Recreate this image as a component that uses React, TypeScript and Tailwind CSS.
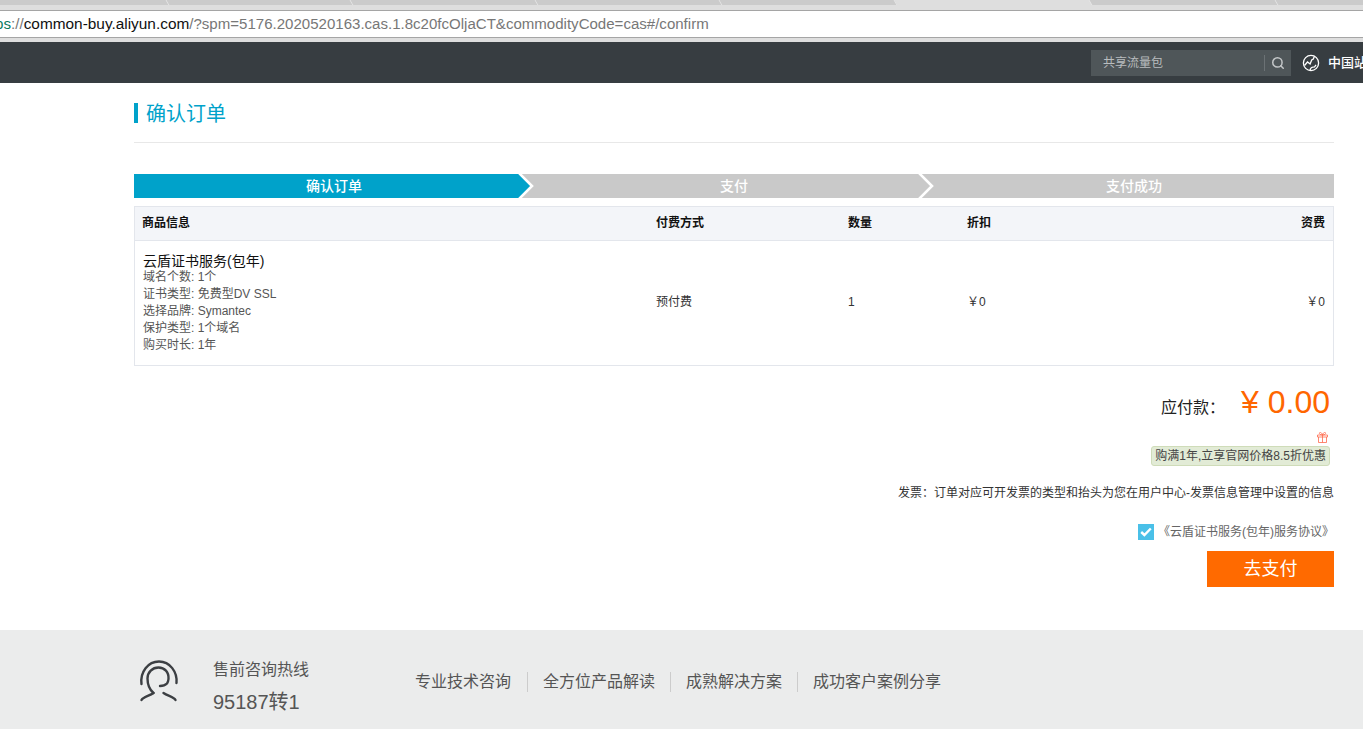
import { Search } from 'lucide-react';

const cjk = 'font-["Liberation_Sans","Noto_Sans_CJK_SC",sans-serif]';

const tabs = [
  { w: 'w-[172px]', active: false },
  { w: 'w-[184px]', active: false },
  { w: 'w-[185px]', active: false },
  { w: 'w-[184px]', active: false },
  { w: 'w-[175px]', active: false },
  { w: 'w-[195px]', active: true },
  { w: 'w-[186px]', active: false },
  { w: 'w-[90px]', active: false },
];

const steps = [
  { label: '确认订单', bg: 'bg-[#00a2ca]', fill: '#00a2ca', arrow: true },
  { label: '支付', bg: 'bg-[#c9c9c9]', fill: '#c9c9c9', arrow: true },
  { label: '支付成功', bg: 'bg-[#c9c9c9]', fill: '#c9c9c9', arrow: false },
];

const details = ['域名个数: 1个', '证书类型: 免费型DV SSL', '选择品牌: Symantec', '保护类型: 1个域名', '购买时长: 1年'];

const links = ['专业技术咨询', '全方位产品解读', '成熟解决方案', '成功客户案例分享'];

function BrowserBar() {
  return (
    <div className="shrink-0">
      <div className="h-[10px] overflow-hidden bg-[#dedede]">
        <div className="flex h-[5px] -ml-[4px] skew-x-[30deg]">
          {tabs.map((t, i) => (
            <div key={i} className={`${t.w} shrink-0 border-r border-[#e6e6e6] ${t.active ? 'bg-[#dedede]' : 'bg-[#cbcbcb]'}`} />
          ))}
        </div>
      </div>
      <div className="h-[28px] border-y border-[#a5a5a5] bg-white overflow-hidden whitespace-nowrap text-[15.15px] leading-[26px] font-['Liberation_Sans',sans-serif]">
        <span className="-ml-[5px] inline-block text-[#0b7a5c]">ps</span>
        <span className="text-[#777]">://</span>
        <span className="text-[15.4px] text-[#111]">common-buy.aliyun.com</span>
        <span className="text-[15.06px] text-[#777]">/?spm=5176.2020520163.cas.1.8c20fcOljaCT&amp;commodityCode=cas#/confirm</span>
      </div>
      <div className="h-[4px] bg-[#dedede]" />
    </div>
  );
}

function TopBar() {
  return (
    <div className="h-[41px] shrink-0 bg-[#373d41] flex items-center justify-end overflow-hidden">
      <div className="w-[200px] h-[26px] bg-[#4f5659] flex items-center shrink-0">
        <span className="flex-1 pl-3 text-xs text-[#b9bdbf]">共享流量包</span>
        <span className="w-[27px] h-4 border-l border-[#6c7275] flex items-center justify-center">
          <Search size={14} strokeWidth={2.6} className="text-[#c3c6c8]" />
        </span>
      </div>
      <svg width="18" height="18" viewBox="0 0 18 18" fill="none" stroke="#fff" strokeWidth="1.3" className="ml-[11px] shrink-0">
        <circle cx="9" cy="9" r="7.6" />
        <path d="M2.5 11.5l3-3.5 2.6 2 1.6-4 1.6-1 1-2.5M8 16.4c.4-2 1.4-3 2.6-3.2l2-.4 1.4-2" />
      </svg>
      <span className="ml-2 w-[35px] shrink-0 whitespace-nowrap overflow-hidden text-[13px] font-medium text-white">中国站</span>
    </div>
  );
}

function Steps() {
  return (
    <div className="flex mt-[31px] h-6 text-sm font-medium text-white">
      {steps.map((s) => (
        <div key={s.label} className={`relative flex-1 flex items-center justify-center pb-px ${s.bg}`}>
          {s.label}
          {s.arrow && (
            <svg width="16" height="24" viewBox="0 0 16 24" className="absolute right-0 top-0">
              <rect width="16" height="24" fill="#c9c9c9" />
              <path d="M0 0h1l12 12L1 24H0z" fill={s.fill} />
              <path d="M1 -1l13 13L1 25" fill="none" stroke="#fff" strokeWidth="2.6" />
            </svg>
          )}
        </div>
      ))}
    </div>
  );
}

function OrderTable() {
  return (
    <div className="mt-2 border border-[#e3e6ec] text-xs">
      <div className="grid grid-cols-[513px_192px_119px_1fr_100px] h-[34px] items-center pb-px bg-[#f3f5f9] border-b border-[#e3e6ec] font-bold text-[#111]">
        <div className="pl-[7px]">商品信息</div>
        <div className="px-2">付费方式</div>
        <div className="px-2">数量</div>
        <div className="px-2">折扣</div>
        <div className="px-2 text-right">资费</div>
      </div>
      <div className="grid grid-cols-[513px_192px_119px_1fr_100px] h-[124px] items-center text-[#333]">
        <div className="px-2 self-start pt-3">
          <div className="text-sm leading-[17px] text-[#111]">云盾证书服务(包年)</div>
          <div className="-mt-px leading-[17px] text-[#555]">
            {details.map((d) => (
              <div key={d}>{d}</div>
            ))}
          </div>
        </div>
        <div className="px-2 -mt-[2px]">预付费</div>
        <div className="px-2 -mt-[2px]">1</div>
        <div className="px-2 -mt-[2px]">￥0</div>
        <div className="px-2 -mt-[2px] text-right">￥0</div>
      </div>
    </div>
  );
}

function Summary() {
  return (
    <div className="flex flex-col items-end">
      <div className="flex items-center mt-[14px] mr-1 h-[44px]">
        <span className="text-base text-[#222] mt-[11px]">应付款：</span>
        <span className="ml-[16px] text-[32px] text-[#ff6600]">¥ 0.00</span>
      </div>
      <svg width="11" height="11" viewBox="0 0 11 11" fill="none" stroke="#ff6a4d" strokeWidth="0.8" className="mr-1.5 mt-[8px]">
        <path d="M.5 3h10v2H.5zM1.5 5v5.5h8V5M5.5 3v7.5M5.5 3C3.5 3 2 2 2.5.8S5 .8 5.5 3zM5.5 3c2 0 3.5-1 3-2.2S6 .8 5.5 3z" />
      </svg>
      <div className="mr-1 mt-[3px] h-5 px-[3px] flex items-center bg-[#e2ebd6] border border-[#cfdcb9] rounded-[3px] text-[#444] text-xs whitespace-nowrap">
        购满1年,立享官网价格8.5折优惠
      </div>
      <div className="mt-[18px] text-xs leading-[18px] text-[#333]">
        发票：订单对应可开发票的类型和抬头为您在用户中心-发票信息管理中设置的信息
      </div>
      <div className="flex items-center mt-[22px]">
        <span className="w-4 h-4 mr-1 bg-[#4ac0e8] flex items-center justify-center">
          <svg width="12" height="10" viewBox="0 0 12 10" fill="none" stroke="#fff" strokeWidth="2.4">
            <path d="M1.2 5l3.2 3L10.8 1.5" />
          </svg>
        </span>
        <span className="text-xs leading-4 text-[#666]">《云盾证书服务(包年)服务协议》</span>
      </div>
      <button className="mt-[11px] w-[127px] h-9 bg-[#ff6a00] text-white text-lg">去支付</button>
    </div>
  );
}

function Footer() {
  return (
    <div className="h-[99px] shrink-0 bg-[#ebecec] text-[#555]">
      <div className="w-[1200px] ml-[134px] h-full flex items-start">
        <svg width="40" height="42" viewBox="0 0 40 42" fill="none" stroke="#3c3f43" strokeWidth="2.4" strokeLinecap="round" className="ml-[5px] mt-[30px] shrink-0">
          <path d="M2.5 24C1 12 9 1.5 20 1.5S38.5 12 37.5 23" />
          <path d="M14.5 33C11 30 8.5 25 8.5 18.5 8.5 12 13.5 7.5 19.5 7.5S30 12 29.5 19c-.2 2-.8 3.5-1.5 4.5-2 2-5 2.5-7 2.5" />
          <path d="M2.5 40C4 37 10 36 14.5 33M24.5 33C29 36 35 37 36.5 40" />
        </svg>
        <div className="ml-[34px] mt-[28px] w-[202px] shrink-0">
          <div className="text-base leading-6">售前咨询热线</div>
          <div className="mt-[6px] text-xl leading-7">95187转1</div>
        </div>
        <div className="flex items-center text-base mt-[42px]">
          {links.map((l, i) => (
            <span key={l} className={`leading-5 px-[15px] ${i > 0 ? 'border-l border-[#ccc]' : 'pl-0 pr-[16px]'}`}>
              {l}
            </span>
          ))}
        </div>
      </div>
    </div>
  );
}

export default function App() {
  return (
    <div className={`h-[729px] w-[1363px] overflow-hidden flex flex-col bg-white ${cjk}`}>
      <BrowserBar />
      <TopBar />
      <main className="flex-1 min-h-0 pl-[134px] pr-[29px]">
        <div className="h-[60px] border-b border-[#e8e8e8] pt-[20px]">
          <h1 className="h-5 border-l-4 border-[#00a2ca] pl-2 text-xl leading-[22px] text-[#00a2ca]">确认订单</h1>
        </div>
        <Steps />
        <OrderTable />
        <Summary />
      </main>
      <Footer />
    </div>
  );
}
